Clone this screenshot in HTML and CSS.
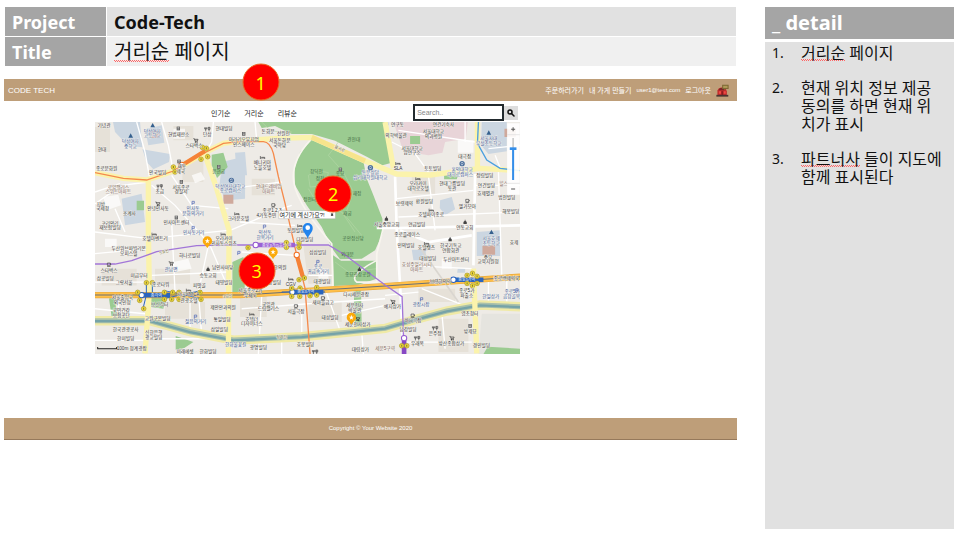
FILE: index.html
```html
<!DOCTYPE html>
<html lang="ko">
<head>
<meta charset="utf-8">
<title>Code-Tech 거리순 페이지</title>
<link rel="stylesheet" href="styles.css">
</head>
<body>
<main class="slide">
  <section class="left">
    <table class="meta">
      <tr><th scope="row">Project</th><td class="project">Code-Tech</td></tr>
      <tr><th scope="row">Title</th><td class="title"><span class="typo">거리순</span> 페이지</td></tr>
    </table>

    <div class="site">
      <span class="badge badge-1">1</span>
      <header class="site-header">
        <a class="brand" href="#">CODE TECH</a>
        <nav class="nav">
          <a href="#">주문하러가기</a>
          <a href="#">내 가게 만들기</a>
          <a class="account" href="#">user1@test.com</a>
          <a href="#">로그아웃</a>
          <svg class="shop" viewBox="0 0 36 36" aria-hidden="true">
            <path d="M4 31V18Q6 11 14 10H22Q28 12 30 20V31Z" fill="#c22c2c"/>
            <path d="M7 17L11 11H20L23 17Z" fill="#7d2527"/>
            <path d="M17 2H35V14H26L22 18V14H17Z" fill="#7e6a35"/>
            <path d="M20 5H32V11H20Z" fill="#b09a58"/>
            <path d="M8 20H14V27H8ZM21 20H27V27H21Z" fill="#f04a44"/>
            <path d="M15 20H20V31H15Z" fill="#8a1b1f"/>
            <path d="M1 30H34V35H1Z" fill="#4b3330"/>
          </svg>
        </nav>
      </header>

      <div class="content">
        <div class="toolbar">
          <nav class="tabs">
            <a href="#">인기순</a>
            <a href="#">거리순</a>
            <a href="#">리뷰순</a>
          </nav>
          <form class="search">
            <input type="text" placeholder="Search.." aria-label="검색">
            <button type="button" aria-label="검색하기">
              <svg viewBox="0 0 16 16" aria-hidden="true"><circle cx="6" cy="6" r="4" fill="none" stroke="#111" stroke-width="3"/><path d="M9 9L14 14" stroke="#111" stroke-width="3" stroke-linecap="round"/></svg>
            </button>
          </form>
        </div>

        <div class="map">
          <svg class="map-art" viewBox="0 0 1275 696" role="img" aria-label="종로 지도">
            <defs>
              <g id="star-pin">
                <path d="M0 0C-3-9-14-12-14-22A14 14 0 0 1 14-22C14-12 3-9 0 0Z" fill="#fba90a"/>
                <path d="M0-30L2-24H8L3-21L5-15L0-18L-5-15L-3-21L-8-24H-2Z" fill="#fff"/>
              </g>
              <g id="exit"><circle r="7" fill="#eed835" stroke="#a8952f" stroke-width="2"/><path d="M0-3V3" stroke="#443" stroke-width="2"/></g>
              <g id="cafe"><path d="M-5-4H4V2Q4 4 2 4H-3Q-5 4-5 2ZM4-2Q8-1 4 2M-6 6H5" fill="none" stroke="#444" stroke-width="2"/></g>
              <g id="bed"><path d="M-6-4V5M-6 2H7V5M-3 0H7V2" fill="none" stroke="#444" stroke-width="2"/></g>
              <g id="food"><path d="M-5-6V6M-8-6V-1H-2V-6M5-6V6M2-6H8V0H2Z" fill="none" stroke="#444" stroke-width="2"/></g>
              <g id="cart" fill="#333"><path d="M-7-5H-4L-2 2H5L7-3H-3" fill="none" stroke="#333" stroke-width="2"/><circle cx="-1" cy="5" r="2"/><circle cx="4" cy="5" r="2"/></g>
              <g id="church"><path d="M-1-7H1V-4L5 0V6H-5V0L-1-4Z" fill="#444"/></g>
              <g id="school"><path d="M0-8L7 5H-7Z" fill="#35608e"/></g>
              <g id="bldg"><path d="M-5-6H5V5H-5Z" fill="#555"/><path d="M-3-3H3M-3 1H3" stroke="#eee" stroke-width="2"/></g>
              <g id="uni"><circle r="8" fill="#4c6f9c"/><path d="M-4-1L0-4L4-1M-3 3H3" stroke="#fff" stroke-width="2" fill="none"/></g>
              <g id="flag"><path d="M-3 6V-5H4V1H-3" fill="none" stroke="#4a63b5" stroke-width="2"/></g>
            </defs>

            <rect width="1275" height="696" fill="#eeebe6"/>

            <!-- campuses, hospitals and landmarks -->
            <g fill="#cbd6e1">
              <path d="M54 0H135L142 76L100 72L60 30ZM150 22L200 10L208 62L160 70ZM142 82L225 96L222 120L175 142L155 120Z"/>
              <path d="M378 150L390 118L430 108L450 130V230L395 235L372 200ZM420 92L450 90L456 160H425Z"/>
              <path d="M80 230L140 215L150 300L90 310Z"/>
              <path d="M1035 235L1070 225L1080 262L1050 280L1034 258ZM1160 0H1235V88L1180 96L1158 70Z"/>
              <path d="M1145 330L1215 325V402H1145ZM950 383H992V415H955ZM865 0L880 0L882 10H868ZM1088 440H1110V452H1086Z"/>
            </g>
            <path d="M895 0H1118L1112 50L1050 60L1042 92L1000 100L925 88Z" fill="#e8d4d8"/>
            <path d="M162 28H190V48H162ZM385 218H415V245H385ZM1162 370H1200V398H1162ZM1228 20H1262V45H1228Z" fill="#cfa99c"/>
            <g fill="#e6e1d8">
              <path d="M0 15H45V90H0ZM235 12H295V55H235ZM262 115H325V180H262ZM470 170H540V220H470ZM950 160H1020V215H950Z"/>
              <path d="M20 440H125V490H20ZM180 440H285V485H180ZM210 540H330V590H210ZM435 520H515V585H435ZM1030 590H1120V690H1030ZM640 540H740V600H640ZM970 500H1080V540H970ZM625 372H710V485H640Z"/>
            </g>
            <path d="M1160 575H1275V696H1150Z" fill="#e5e4df"/>
            <path d="M290 160L318 150L330 172L300 184ZM25 225L70 218L78 250L35 265ZM235 420L280 410L290 440L240 450ZM30 350H65V375H30ZM235 20H270V50H235ZM1088 55H1135V92H1088ZM670 440H700V470H670ZM1040 410H1070V440H1040Z" fill="#fff" opacity=".7"/>

            <!-- parks -->
            <g fill="#9bcb91">
              <path d="M490 0H868L882 60L890 122L862 130L815 104L720 56L650 36L590 36L540 12L500 18Z"/>
              <path d="M650 54L690 64L806 124L815 170L835 220L862 290V335L840 385L800 410L735 412L715 385L680 315L635 250L600 190L598 140L615 90Z"/>
              <path d="M714 400L738 416H845V470L790 488L716 492Z"/>
              <path d="M776 506H798L800 620H780Z"/>
              <path d="M350 98L385 92L398 135L366 168L350 130Z"/>
              <path d="M412 420L445 405L450 510H412ZM168 525L215 530L205 560L168 555Z"/>
              <path d="M42 529L58 527L68 585H50ZM242 642L295 660L268 678L242 683ZM125 236H147V265H125ZM945 42H975V66H945ZM1047 157H1090L1085 172H1047ZM1178 674L1275 680V696H1165Z"/>
            </g>
            <g fill="none" stroke="#b3d6a6" stroke-width="2">
              <path d="M500 0Q530 40 590 30M640 160L665 145L700 152L690 190L645 195ZM730 60L700 100L745 150L775 210L750 280L800 340"/>
              <path d="M640 200L670 250L740 270L780 330M720 420L760 450L845 440"/>
            </g>
            <path d="M645 55Q585 120 597 185T710 365L714 505M864 320L845 395V480H785Q770 470 790 450Q815 430 845 415" fill="none" stroke="#f8f5ee" stroke-width="5"/>

            <!-- side streets -->
            <g fill="none" stroke="#fff" stroke-width="4">
              <path d="M125 0L150 90L165 174M200 0L220 70L235 150M355 0L350 60L330 95M480 0L485 56M0 245L80 190L160 180"/>
              <path d="M0 210L75 185M170 190L240 250L320 340L345 370L400 500M0 330L160 350L400 325M60 260L90 330M230 160L290 250L400 260"/>
              <path d="M230 300L240 510M340 370L310 510L320 640M0 395L160 380M0 480H160M170 460L400 450M170 650H400M65 520L75 590M0 655H150M285 500V640M0 560L150 575"/>
              <path d="M405 325L560 260L590 250M405 200L560 180M435 300L600 310M440 390L600 400M440 560L640 545L870 530M500 520L490 696M690 500L740 640"/>
              <path d="M640 460H712M560 640V696M620 640V560M740 580L870 550"/>
              <path d="M905 230L1135 205M910 285L1275 270M1000 160L1020 325M1210 150L1220 460M1140 190H1275M1180 80L1275 70M930 430L1130 440M980 500L1130 560M1180 470V550M1235 470V560"/>
              <path d="M930 660H1130M1040 570L1050 680M870 520L970 510M800 630L805 696M890 60L960 95L1000 150M910 25L1140 60M1110 0V60M1200 100L1220 150"/>
            </g>
            <path d="M845 318H915L1275 310M900 164L905 324L915 490L925 690M1140 156L1135 430M915 325L1000 360L1130 340" fill="none" stroke="#fff" stroke-width="8"/>
            <path d="M970 370L1090 540" fill="none" stroke="#dad6d0" stroke-width="5"/>

            <!-- stream -->
            <g fill="none">
              <path d="M0 596H165L285 629L415 654L620 644L870 619L955 594L1055 567L1155 549L1275 554" stroke="#f0eaa6" stroke-width="28"/>
              <path d="M0 596H165L285 629L415 654L620 644L870 619L955 594L1055 567L1155 549L1275 554" stroke="#a9c0ab" stroke-width="15"/>
              <path d="M0 597H165L285 630L415 655L620 645L870 620L955 595L1055 568L1155 550L1275 555" stroke="#76a3a8" stroke-width="7"/>
            </g>

            <!-- avenues -->
            <g fill="none" stroke="#fbf3ac" stroke-width="16">
              <path d="M0 152L85 169L155 174L235 147L325 94L385 64L435 57L550 49L650 46L810 117L905 156L1005 159L1155 139L1275 146"/>
              <path d="M330 99L365 200L402 324L400 694M160 174V324L163 510L150 694M1147 0V140M1135 440L1145 694M870 0L895 139"/>
            </g>
            <path d="M650 46L810 117" fill="none" stroke="#f7e48c" stroke-width="15"/>

            <!-- transit lines -->
            <g fill="none">
              <path d="M0 519H435L870 492L1275 464" stroke="#e9a93c" stroke-width="19"/>
              <path d="M0 519H435L870 492L1275 464" stroke="#ffc04a" stroke-width="15"/>
              <path d="M0 519H435L870 492L1275 464" stroke="#6a7078" stroke-width="3"/>
              <path d="M1150 0L1147 64L1175 114L1215 139L1275 146" stroke="#4a9fdf" stroke-width="4"/>
              <path d="M0 152L85 169L155 174L235 147L285 114L325 94L385 64L435 59H505Q525 60 535 94L550 164L570 244L605 399L630 499L645 696" stroke="#f58a4b" stroke-width="4"/>
              <path d="M0 426H60L110 416L185 389L305 371L405 369H700L750 399L870 489L921 524L927 694" stroke="#a276d8" stroke-width="4"/>
              <path d="M262 129L325 90M605 399L622 460" stroke="#f58238" stroke-width="13" stroke-linecap="round"/>
              <path d="M475 369H600" stroke="#9a62d4" stroke-width="13"/>
              <path d="M140 519H225M590 510H685M1075 473H1165" stroke="#2b65bd" stroke-width="14"/>
              <path d="M154 480V519L145 555M172 482V510M205 505L320 530M205 530L320 505M560 510H690" stroke="#2b65bd" stroke-width="3"/>
              <path d="M927 650V696" stroke="#8748c4" stroke-width="14"/>
            </g>
            <g stroke-width="3" fill="#fff">
              <circle cx="260" cy="129" r="8" stroke="#f17023"/><circle cx="605" cy="399" r="8" stroke="#f17023"/>
              <circle cx="140" cy="519" r="8" stroke="#2661bf"/><circle cx="592" cy="510" r="8" stroke="#2661bf"/><circle cx="1075" cy="473" r="8" stroke="#2661bf"/>
              <circle cx="482" cy="369" r="8" stroke="#9357d0"/><circle cx="927" cy="648" r="8" stroke="#9357d0"/>
            </g>
            <g>
              <use href="#exit" x="235" y="135"/><use href="#exit" x="240" y="150"/><use href="#exit" x="322" y="76"/><use href="#exit" x="334" y="79"/><use href="#exit" x="318" y="112"/><use href="#exit" x="338" y="104"/>
              <use href="#exit" x="154" y="482"/><use href="#exit" x="172" y="482"/><use href="#exit" x="128" y="511"/><use href="#exit" x="134" y="535"/><use href="#exit" x="146" y="560"/><use href="#exit" x="208" y="511"/><use href="#exit" x="208" y="532"/><use href="#exit" x="233" y="511"/><use href="#exit" x="252" y="511"/><use href="#exit" x="230" y="532"/><use href="#exit" x="252" y="532"/><use href="#exit" x="315" y="511"/><use href="#exit" x="318" y="532"/>
              <use href="#exit" x="459" y="377"/><use href="#exit" x="574" y="362"/><use href="#exit" x="612" y="362"/><use href="#exit" x="574" y="376"/><use href="#exit" x="612" y="376"/><use href="#exit" x="612" y="473"/><use href="#exit" x="628" y="468"/>
              <use href="#exit" x="590" y="498"/><use href="#exit" x="615" y="498"/><use href="#exit" x="665" y="496"/><use href="#exit" x="590" y="523"/><use href="#exit" x="614" y="523"/><use href="#exit" x="645" y="521"/><use href="#exit" x="665" y="519"/>
              <use href="#exit" x="1116" y="460"/><use href="#exit" x="1132" y="454"/><use href="#exit" x="1146" y="463"/><use href="#exit" x="1116" y="484"/><use href="#exit" x="1132" y="491"/><use href="#exit" x="1146" y="484"/>
              <use href="#exit" x="920" y="671"/><use href="#exit" x="935" y="671"/>
            </g>
            <g class="line-name">
              <text x="184" y="524">종각역</text><text x="632" y="514">종로3가역</text><text x="1115" y="478">종로5가역</text><text x="545" y="374">종로3가(5호선)역</text>
            </g>

            <!-- north-west labels -->
            <g class="label" transform="translate(-15 -66)">
              <text x="42" y="80">기념관</text><text x="36" y="153">현대</text>
              <text class="blue" x="121" y="130">덕성여자</text><text class="blue" x="121" y="144">중학교</text>
              <text class="blue" x="187" y="98">덕성여자</text><text class="blue" x="187" y="112">고등학교</text>
              <text x="266" y="108">헌법재판소</text><text x="352" y="108">단상</text><text x="402" y="89">현대빌딩</text>
              <text x="312" y="142">스타벅스</text>
              <text x="50" y="210">종로문화원</text><text x="203" y="222">안국빌딩</text><text x="275" y="205">재동</text><text x="272" y="219">제국</text>
              <text class="green" x="386" y="219">운현궁</text>
              <text class="brown" x="85" y="266">로얄팰리스</text><text class="brown" x="85" y="280">스위트아파트</text>
              <text x="209" y="280">초급</text><text x="273" y="266">서울종로</text><text x="273" y="280">경찰서</text>
              <text class="blue" x="421" y="263">덕성여자대학교</text><text class="blue" x="421" y="277">종로캠퍼스</text>
              <text x="32" y="317">지방</text><text x="38" y="331">국세청</text><text x="118" y="345">조계사</text><text x="204" y="330">안녕인사동</text>
              <text class="blue" x="309" y="331">인사동</text><text class="blue" x="309" y="346">문화의거리</text><text x="259" y="373">인사아트센터</text>
              <text x="60" y="374">코리안리</text><text x="60" y="388">재보험빌딩</text>
            </g>
            <!-- north labels -->
            <g class="label" transform="translate(420 -66)">
              <text x="99" y="98">돈화문</text><text x="26" y="122">아라리오뮤지엄</text><text x="26" y="137">인스페이스</text>
              <text x="145" y="106">선원전</text><text x="134" y="127">서울돈화문</text><text x="134" y="142">국악당</text>
              <text x="82" y="191">베니키아</text><text x="82" y="206">노블호텔</text>
              <text class="green" x="356" y="122">관천대</text><text class="road" x="312" y="150" transform="rotate(25 312 150)">율곡로</text>
              <text class="blue" x="406" y="223">동문상담</text><text class="blue" x="406" y="238">심리대학원대학교</text>
              <text class="green" x="244" y="219">창덕전</text><text class="green" x="315" y="226">종묘</text><text class="green" x="255" y="241">정전</text>
              <text class="green" x="366" y="286">재정</text><text class="green" x="224" y="303">정전터</text><text class="green" x="337" y="346">재궁</text>
              <text class="brown" x="101" y="265">현대드레비앙</text><text class="brown" x="101" y="279">아파트</text>
              <text x="113" y="335">종로1,2,3,</text><text x="94" y="350">4가동주민</text><text x="10" y="360">크라운호텔</text>
            </g>
            <!-- north-east labels -->
            <g class="label" transform="translate(855 -66)">
              <text x="52" y="79">연구동</text><text x="190" y="79">연건기숙사</text><text x="48" y="112">의학박물관</text>
              <text x="160" y="99">서울대학교</text><text x="160" y="114">의과병원</text><text x="96" y="149">서울대학교</text><text x="96" y="163">암연구소</text>
              <text x="254" y="174">대극장</text><text class="blue" x="326" y="120">서울사대</text><text class="blue" x="326" y="135">부설초등학교</text>
              <text x="54" y="211">SLA</text><text x="158" y="211">토토빌딩</text><text class="blue" x="246" y="213">홍익대학교</text><text class="blue" x="240" y="228">대학로캠퍼스</text>
              <text x="314" y="230">정림빌딩</text><text x="114" y="255">오라카이</text><text x="114" y="270">대학로호텔</text>
              <text x="216" y="255">현대그룹빌딩</text><text x="216" y="270">동관</text><text x="319" y="260">연건빌딩</text><text x="317" y="285">효제별관</text>
              <text class="brown" x="370" y="255">힐스</text><text x="380" y="297">법전빌딩</text><text x="392" y="340">해봉빌딩</text>
              <text x="73" y="315">보령제약</text><text x="133" y="310">환원빌딩</text><text x="262" y="325">엘가모아</text><text x="153" y="349">호텔파이종로</text>
              <text x="20" y="378">서울중앙교회</text><text x="110" y="378">연금빌딩</text><text x="254" y="387">연동교회</text>
            </g>
            <!-- south-west labels -->
            <g class="label" transform="translate(-15 309)">
              <text class="blue" x="311" y="28">인사동거리</text><text x="195" y="46">호텔아벤트리</text>
              <text x="116" y="75">두산위브파빌리온</text><text x="116" y="90">오피스텔</text><text x="299" y="96">하나로빌딩</text>
              <text x="402" y="45">오라카이</text><text x="402" y="60">인사동스위츠</text><text x="57" y="141">스타벅스</text><text class="blue" x="243" y="138">관남면</text>
              <text x="398" y="133">남인사마당</text><text x="354" y="155">승동교회</text><text x="46" y="165">삼공빌딩</text><text x="102" y="177">그랑서울</text><text x="147" y="155">미금부터</text>
              <text x="212" y="184">종로타워</text><text x="328" y="185">피맛골</text><text x="402" y="178">태영빌딩</text>
              <text x="97" y="223">서울출입국</text><text x="97" y="238">외국인청</text><text x="209" y="244">보신각터</text><text x="295" y="213">서울YMCA</text><text x="297" y="230">관광호텔</text>
              <text class="road" x="413" y="218">1호선</text><text x="94" y="262">국민건강</text><text x="94" y="277">보험공단</text><text x="399" y="252">제안안과의원</text>
              <text x="203" y="286">교원구몬빌딩</text><text class="blue" x="317" y="294">젊음의거리</text><text x="396" y="289">통일빌딩</text><text x="388" y="317">삼일빌딩</text>
              <text x="107" y="319">한국관광공사</text><text x="107" y="345">한미빌딩</text><text x="191" y="326">신한은행</text><text x="191" y="341">광교빌딩</text>
              <text x="285" y="383">미래에셋</text><text x="354" y="383">한화빌딩</text><text class="blue" x="437" y="362">한화불꽃길</text>
              <text x="125" y="375">100m 청계광장</text><text class="road" x="224" y="84" transform="rotate(-17 224 84)">5호선</text>
            </g>
            <!-- south labels -->
            <g class="label" transform="translate(420 309)">
              <text class="blue" x="90" y="27">익선동</text><text class="blue" x="90" y="42">한옥거리</text><text x="182" y="21">동원빌딩</text><text x="209" y="47">다원빌딩</text>
              <text x="248" y="87">삼삼빌딩</text><text class="green" x="354" y="44">공안정신당</text><text class="green" x="337" y="92">외대문</text>
              <text class="blue" x="249" y="128">종로</text><text class="blue" x="249" y="143">귀금속거리</text><text x="261" y="174">대광빌딩</text>
              <text x="135" y="131">한의원</text><text x="112" y="176">금강빌딩</text><text x="167" y="182">CGV</text><text class="green" x="368" y="154">종묘광장공원</text>
              <text x="46" y="200">서울종로2가</text><text x="46" y="216">우체국</text><text x="100" y="242">국일관</text><text x="100" y="256">드림팰리스</text>
              <text x="183" y="263">서울극장</text><text x="264" y="238">새마을금고</text><text x="363" y="213">다시세운광장</text>
              <text x="50" y="287">호텔더</text><text x="50" y="301">디자이너스</text><text x="285" y="283">태성빌딩</text><text x="359" y="245">세운전자</text><text x="359" y="260">박물관</text><text x="368" y="304">세운전자상가</text>
              <text class="road" x="140" y="343">청계천</text><text x="70" y="372">광명빌딩</text><text x="211" y="363">효봉빌딩</text>
              <text x="376" y="379">대림상가</text><text class="brown" x="450" y="376">세운5구역</text>
            </g>
            <!-- south-east labels -->
            <g class="label" transform="translate(855 309)">
              <text x="81" y="34">종로플레이스</text><text x="78" y="65">인의빌딩</text><text x="139" y="73">호텔캣츠</text>
              <text x="212" y="65">한국기독교</text><text x="212" y="80">연합회관</text><text class="blue" x="333" y="45">서울효제</text><text class="blue" x="333" y="59">초등학교</text><text x="402" y="58">효제</text>
              <text x="143" y="104">대성빌딩</text><text x="228" y="109">두산아트센터</text><text x="324" y="101">중부</text><text x="324" y="115">교육지원청</text>
              <text class="brown" x="110" y="124">효성주얼리시티</text><text class="brown" x="110" y="139">아파트</text><text x="181" y="174">보령한의약</text><text x="379" y="166">종로백제약국</text>
              <text x="260" y="201">종로5가</text><text x="260" y="216">파출소</text><text class="blue" x="332" y="219">한일상가</text><text class="blue" x="396" y="205">종로5가</text><text class="blue" x="394" y="220">곱창골목</text>
              <text x="37" y="249">예지상가</text><text class="blue" x="123" y="242">광장시장</text><text x="99" y="291">바다극장</text><text x="84" y="319">남강빌딩</text><text x="269" y="271">염초청터</text>
              <text x="165" y="331">은주정</text><text x="270" y="325">방제묘</text><text x="112" y="361">우래옥</text><text x="214" y="360">방산종합상가</text><text x="304" y="367">경인빌딩</text>
            </g>

            <!-- point-of-interest icons -->
            <use href="#school" x="107" y="42"/><use href="#school" x="173" y="11"/><use href="#school" x="1181" y="33"/><use href="#school" x="1189" y="331"/>
            <use href="#bldg" x="250" y="20"/><use href="#food" x="337" y="22"/><use href="#cart" x="302" y="55"/><use href="#bldg" x="371" y="135"/><use href="#uni" x="409" y="175"/><use href="#bldg" x="252" y="119"/><use href="#bldg" x="259" y="180"/>
            <use href="#food" x="194" y="194"/><use href="#cart" x="188" y="245"/><use href="#flag" x="294" y="243"/><use href="#bldg" x="244" y="287"/><use href="#flag" x="294" y="318"/><use href="#bed" x="425" y="275"/>
            <use href="#bldg" x="446" y="36"/><use href="#bed" x="502" y="106"/><use href="#bldg" x="736" y="143"/><use href="#uni" x="826" y="137"/><use href="#cafe" x="535" y="249"/><use href="#flag" x="508" y="314"/><use href="#bed" x="614" y="311"/>
            <use href="#bed" x="908" y="124"/><use href="#bed" x="968" y="170"/><use href="#uni" x="1101" y="125"/><use href="#bed" x="1008" y="264"/><use href="#church" x="874" y="290"/><use href="#church" x="1110" y="300"/><use href="#cafe" x="1117" y="236"/>
            <use href="#bed" x="177" y="336"/><use href="#bed" x="384" y="336"/><use href="#cafe" x="42" y="427"/><use href="#cart" x="228" y="424"/><use href="#church" x="339" y="441"/><use href="#bed" x="280" y="504"/><use href="#flag" x="301" y="584"/>
            <use href="#flag" x="668" y="420"/><use href="#bed" x="587" y="471"/><use href="#bed" x="470" y="576"/><use href="#cafe" x="603" y="552"/><use href="#cafe" x="684" y="528"/><use href="#cart" x="787" y="590"/><use href="#food" x="660" y="690"/><use href="#flag" x="431" y="393"/>
            <use href="#church" x="1065" y="352"/><use href="#bed" x="994" y="364"/><use href="#church" x="793" y="442"/><use href="#cart" x="893" y="539"/><use href="#flag" x="979" y="532"/><use href="#cafe" x="953" y="580"/><use href="#food" x="1020" y="619"/><use href="#food" x="966" y="649"/><use href="#cart" x="1070" y="648"/><use href="#bldg" x="1125" y="612"/><use href="#flag" x="1265" y="505"/>
            <path d="M8 675V680H65V675" fill="none" stroke="#222" stroke-width="3"/>

            <!-- partner shops -->
            <use href="#star-pin" x="337" y="379"/><use href="#star-pin" x="534" y="412"/><use href="#star-pin" x="769" y="608"/>

            <!-- current location -->
            <path d="M638 350C635 338 623 332 623 318A15 15 0 0 1 653 318C653 332 641 338 638 350Z" fill="#2384ed"/>
            <circle cx="638" cy="317" r="7" fill="#fff"/>
            <path d="M551 266H721V290H551Z" fill="#fff" stroke="#999" stroke-width="1"/>
            <text class="here" x="553" y="284">여기에 계신가요?!</text>
            <path d="M708 275L714 281M714 275L708 281" stroke="#222" stroke-width="3"/>

            <!-- zoom control -->
            <path d="M1236 4H1274V218H1236Z" fill="#fff" opacity=".9"/>
            <path d="M1236 38H1274M1236 184H1274" stroke="#ddd" stroke-width="2"/>
            <path d="M1248 22H1260M1254 16V28M1248 201H1260" stroke="#555" stroke-width="3"/>
            <path d="M1254 48V174" stroke="#ccc" stroke-width="5"/><path d="M1254 80V174" stroke="#338eea" stroke-width="6"/><path d="M1244 76H1264V84H1244Z" fill="#338eea"/>
          </svg>
          <span class="badge badge-2">2</span>
          <span class="badge badge-3">3</span>
        </div>
      </div>

      <footer class="site-footer">Copyright © Your Website 2020</footer>
    </div>
  </section>

  <aside class="detail">
    <h2>_ detail</h2>
    <ol>
      <li><span class="typo">거리순</span> 페이지</li>
      <li>현재 위치 정보 제공 동의를 하면 현재 위치가 표시</li>
      <li><span class="typo">파트너사</span> 들이 지도에 함께 표시된다</li>
    </ol>
  </aside>
</main>
</body>
</html>
```
FILE: styles.css
```css
* { box-sizing: border-box; }

body {
  margin: 0;
  background: #fff;
  color: #111;
  font-family: "Noto Sans", "Noto Sans CJK KR", sans-serif;
}

a { color: inherit; text-decoration: none; }

.slide {
  display: grid;
  grid-template-columns: minmax(0, 1fr) 189px;
  gap: 28px;
  min-height: 100vh;
  padding: 6px 4px 4px;
}

/* project header */
.meta {
  width: 100%;
  border-spacing: 1px;
  table-layout: fixed;
  margin-bottom: 12px;
}
.meta th,
.meta td {
  height: 29px;
  padding: 0 7px;
  line-height: 28px;
  text-align: left;
  white-space: nowrap;
}
.meta th {
  width: 101px;
  background: #a5a5a5;
  color: #fff;
  font-size: 18px;
}
.meta .project { background: #e1e1e1; font-size: 18px; font-weight: 700; }
.meta .title { background: #f0f0f0; font-size: 20px; }

/* spell-check squiggle */
.typo {
  background:
    repeating-linear-gradient(90deg, #f66 0 1px, transparent 1px 2px) 0 calc(100% - 4px) / 100% 1px no-repeat,
    repeating-linear-gradient(90deg, transparent 0 1px, #f66 1px 2px) 0 calc(100% - 3px) / 100% 1px no-repeat;
}

/* site preview */
.site { position: relative; }

.site-header {
  display: flex;
  align-items: center;
  justify-content: space-between;
  height: 22px;
  padding: 0 8px 0 4px;
  background: #be9e79;
  color: #fff;
}
.brand { font: 8px "Liberation Sans", sans-serif; }
.nav {
  display: flex;
  align-items: center;
  gap: 5px;
  font: 7px "Liberation Sans", "Noto Sans CJK KR", sans-serif;
}
.account { font-size: 6px; }
.shop { width: 13px; height: 13px; }

.content {
  width: 58%;
  margin-left: 91px;
}
.toolbar {
  display: flex;
  align-items: center;
  justify-content: space-between;
  height: 21px;
  padding: 2px 2px 0 116px;
}
.tabs {
  display: flex;
  gap: 14px;
  font: 7px "Noto Sans CJK KR", sans-serif;
  color: #222;
}
.search { display: flex; align-items: center; }
.search input {
  width: 91px;
  height: 17px;
  padding: 0 2px;
  border: 2px solid #222a2e;
  background: #fff;
  font: 7px "Liberation Sans", sans-serif;
}
.search input::placeholder { color: #888; opacity: 1; }
.search button {
  display: grid;
  place-items: center;
  width: 14px;
  height: 14px;
  padding: 0;
  border: 0;
  background: #ddd;
}
.search button svg { width: 8px; height: 8px; }

.map { position: relative; }
.map-art { display: block; width: 100%; height: auto; }
.label,
.line-name {
  font: 14px "Liberation Sans", "Noto Sans CJK KR", sans-serif;
  text-anchor: middle;
}
.label { fill: #333; paint-order: stroke; stroke: #f5f3ef; stroke-width: 2px; }
.label .blue { fill: #3c5b96; }
.label .green { fill: #3f6b45; stroke: none; }
.label .brown { fill: #80665a; }
.label .road { fill: #777240; font-size: 12px; }
.line-name { fill: #fff; font-size: 12px; }
.here { font: 18px "Liberation Sans", "Noto Sans CJK KR", sans-serif; fill: #222; }

.badge {
  position: absolute;
  display: grid;
  place-items: center;
  width: 37px;
  height: 37px;
  border: 1px solid #ed6b24;
  border-radius: 50%;
  background: #f00;
  color: #ff0;
  font-size: 18px;
  line-height: 18px;
  transform: translate(-50%, -50%);
}
.badge-1 { left: 35%; top: 3px; }
.badge-2 { left: 56%; top: 31%; }
.badge-3 { left: 38%; top: 64%; }

.site-footer {
  height: 22px;
  margin-top: 64px;
  border-bottom: 1px solid #96795b;
  background: #be9e79;
  color: #fff;
  font: 6px/21px "Liberation Sans", sans-serif;
  text-align: center;
}

/* notes */
.detail {
  display: flex;
  flex-direction: column;
  gap: 3px;
  padding-top: 1px;
}
.detail h2 {
  margin: 0;
  padding: 0 7px;
  background: #a5a5a5;
  color: #fff;
  font-size: 20px;
  line-height: 32px;
}
.detail ol {
  flex: 1;
  margin: 0;
  padding: 2px 10px 0 36px;
  background: #e1e1e1;
  font-size: 16px;
  line-height: 18px;
  list-style: none;
  counter-reset: note;
}
.detail li {
  position: relative;
  margin-bottom: 17px;
  counter-increment: note;
}
.detail li::before {
  content: counter(note) ".";
  position: absolute;
  left: -29px;
  font-size: 14px;
}
```
